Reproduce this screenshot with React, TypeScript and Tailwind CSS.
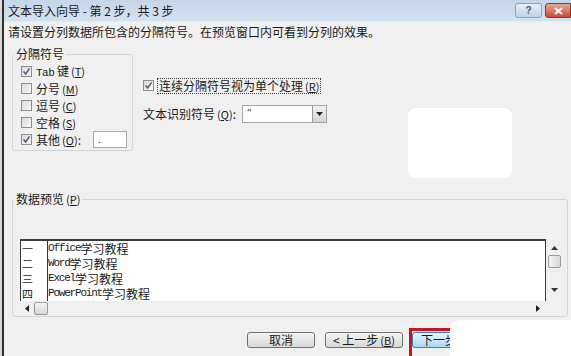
import React from "react";

function Box({ checked }: { checked?: boolean }) {
  return (
    <span className="w-[11px] h-[11px] border border-[#8f8f8f] bg-linear-to-br from-[#d9d9d9] to-[#f8f8f8] flex items-center justify-center shrink-0">
      {checked && (
        <svg width="9" height="9" viewBox="0 0 9 9">
          <path d="M1.6 4.4 L3.6 7 L7.6 1.4" stroke="#4a5c82" strokeWidth="1.5" fill="none" />
        </svg>
      )}
    </span>
  );
}

function M({ k }: { k: string }) {
  return (
    <span className="text-[11px] ml-[2px]">
      (<span className="underline">{k}</span>)
    </span>
  );
}

const rows: [string, string][] = [
  ["一", "Office"],
  ["二", "Word"],
  ["三", "Excel"],
  ["四", "PowerPoint"],
];

function Btn({ children, blue, wide }: { children: React.ReactNode; blue?: boolean; wide?: boolean }) {
  return (
    <div
      className={
        "h-[16px] rounded-[3px] border flex items-center justify-center text-[12px] leading-none whitespace-nowrap " +
        (wide ? "w-[78px] " : "w-[68px] ") +
        (blue
          ? "border-[#3c7fb1] bg-linear-to-b from-[#eaf6fd] to-[#a7d9f5]"
          : "border-[#707070] bg-linear-to-b from-[#f4f4f4] to-[#d8d8d8]")
      }
    >
      {children}
    </div>
  );
}

export default function App() {
  return (
    <div className="w-[571px] h-[356px] overflow-hidden relative bg-[#f0f0f0] flex text-[#1a1a1a] font-['Noto_Sans_CJK_SC','Noto_Sans',sans-serif]">
      <div className="w-[2px] bg-[#d8d8d8] shrink-0" />
      <div className="flex-1 border-l-2 border-[#2f2f2f] flex flex-col min-w-0">
        {/* Title bar */}
        <div className="h-[22px] flex items-center bg-linear-to-b from-[#c6d6e9] to-[#d4e1ef] border-b border-[#e4ebf3] pl-[4px] shrink-0">
          <span className="text-[12px] leading-none whitespace-pre">文本导入向导 - 第 2 步，共 3 步</span>
          <div className="ml-auto flex items-center gap-[3px]">
            <div className="w-[27px] h-[15px] rounded-[3px] border border-[#8ea3bf] bg-linear-to-b from-[#e6eef7] to-[#c3d3e6] flex items-center justify-center text-[10px] leading-none text-[#4a5a78] font-['Liberation_Sans',sans-serif] font-bold">
              ?
            </div>
            <div className="w-[26px] h-[15px] rounded-l-[3px] border border-[#8b3a30] bg-linear-to-b from-[#e9a497] to-[#c44a3c] flex items-center justify-center">
              <svg width="9" height="8" viewBox="0 0 9 8">
                <path d="M1 1 L8 7 M8 1 L1 7" stroke="#fff" strokeWidth="2" />
              </svg>
            </div>
          </div>
        </div>

        {/* Body */}
        <div className="pl-[4px] flex flex-col">
          <div className="text-[12px] leading-[16px] mt-[2px]">
            请设置分列数据所包含的分隔符号。在预览窗口内可看到分列的效果。
          </div>

          <div className="flex mt-[7px]">
            <fieldset className="ml-[4px] w-[121px] border border-[#d0d8de] rounded-[3px] p-0">
              <legend className="ml-[1px] px-[2px] text-[12px] leading-[14px]">分隔符号</legend>
              <div className="pl-[8px] pt-[2px] pb-[2px] flex flex-col text-[12px]">
                <div className="h-[17px] flex items-center gap-[4px]">
                  <Box checked />
                  <span>
                    <span className="font-['Liberation_Mono',monospace] text-[11px] tracking-[-0.5px]">Tab</span> 键<M k="T" />
                  </span>
                </div>
                <div className="h-[17px] flex items-center gap-[4px]">
                  <Box />
                  <span>
                    分号<M k="M" />
                  </span>
                </div>
                <div className="h-[17px] flex items-center gap-[4px]">
                  <Box />
                  <span>
                    逗号<M k="C" />
                  </span>
                </div>
                <div className="h-[17px] flex items-center gap-[4px]">
                  <Box />
                  <span>
                    空格<M k="S" />
                  </span>
                </div>
                <div className="h-[17px] flex items-center gap-[4px]">
                  <Box checked />
                  <span className="w-[53px]">
                    其他<M k="O" />:
                  </span>
                  <div className="w-[34px] h-[17px] border border-[#a8a8a8] bg-white text-[10px] leading-none flex items-end pl-[4px] pb-[3px]">
                    .
                  </div>
                </div>
              </div>
            </fieldset>

            <div className="ml-[10px] flex flex-col text-[12px]">
              <div className="mt-[31px] h-[15px] flex items-center gap-[3px]">
                <Box checked />
                <span className="border border-dotted border-[#444] px-[1px] leading-[13px]">
                  连续分隔符号视为单个处理<M k="R" />
                </span>
              </div>
              <div className="mt-[12px] h-[18px] flex items-center">
                <span className="w-[99px]">
                  文本识别符号<M k="Q" />:
                </span>
                <div className="w-[85px] h-[18px] border border-[#a5a5a5] bg-white flex">
                  <span className="flex-1 pl-[4px] text-[11px] leading-[12px] font-['Liberation_Serif',serif]">"</span>
                  <div className="w-[14px] border-l border-[#9a9a9a] bg-linear-to-b from-[#f2f2f2] to-[#d4d4d4] flex items-center justify-center">
                    <svg width="7" height="4" viewBox="0 0 7 4">
                      <path d="M0 0 L7 0 L3.5 4 Z" fill="#222" />
                    </svg>
                  </div>
                </div>
              </div>
            </div>
          </div>

          {/* Data preview */}
          <fieldset className="mt-[41px] ml-[4px] w-[556px] border border-[#d0d8de] rounded-[3px] p-0">
            <legend className="ml-[1px] px-[2px] text-[12px] leading-[14px]">
              数据预览<M k="P" />
            </legend>
            <div className="pl-[7px] pr-[5px] pt-[33px] flex flex-col">
              <div className="flex">
                <div className="flex-1 h-[62px] border-t-2 border-l-[1.5px] border-r border-[#3a3a3a] bg-white flex">
                  <div className="w-[27px] border-r border-[#333] flex flex-col">
                    {rows.map((r) => (
                      <div key={r[0]} className="h-[15px] flex items-center text-[10px] leading-none pl-[1px] scale-x-110 origin-left">
                        {r[0]}
                      </div>
                    ))}
                  </div>
                  <div className="flex-1 flex flex-col">
                    {rows.map((r) => (
                      <div key={r[1]} className="h-[15px] flex items-center text-[12px] leading-none">
                        <span className="font-['Liberation_Mono',monospace] text-[11px] tracking-[-1.2px]">{r[1]}</span>
                        <span>学习教程</span>
                      </div>
                    ))}
                  </div>
                </div>
                <div className="w-[16px] h-[62px] flex flex-col items-center">
                  <svg className="mt-[7px]" width="7" height="4" viewBox="0 0 7 4">
                    <path d="M0 4 L7 4 L3.5 0 Z" fill="#333" />
                  </svg>
                  <div className="mt-[5px] w-[13px] h-[13px] rounded-[2px] border border-[#9a9a9a] bg-linear-to-r from-[#f4f4f4] to-[#d9d9d9]" />
                  <svg className="mt-[20px]" width="7" height="4" viewBox="0 0 7 4">
                    <path d="M0 0 L7 0 L3.5 4 Z" fill="#333" />
                  </svg>
                </div>
              </div>
              <div className="h-[15px] w-[526px] flex items-center">
                <svg className="ml-[5px]" width="4" height="7" viewBox="0 0 4 7">
                  <path d="M4 0 L4 7 L0 3.5 Z" fill="#222" />
                </svg>
                <div className="ml-[5px] w-[14px] h-[13px] rounded-[2px] border border-[#9a9a9a] bg-linear-to-b from-[#f4f4f4] to-[#d9d9d9]" />
                <svg className="ml-auto mr-[6px]" width="4" height="7" viewBox="0 0 4 7">
                  <path d="M0 0 L0 7 L4 3.5 Z" fill="#222" />
                </svg>
              </div>
            </div>
          </fieldset>

          {/* Buttons */}
          <div className="mt-[15px] flex pl-[239px]">
            <Btn>取消</Btn>
            <div className="ml-[10px]">
              <Btn wide>
                &lt; 上一步<M k="B" />
              </Btn>
            </div>
            <div className="relative ml-[9px]">
              <Btn blue wide>
                下一步<M k="N" /> &gt;
              </Btn>
              <div className="absolute -left-[3px] -top-[4px] w-[60px] h-[40px] border-[3px] border-[#c8141e]" />
            </div>
            <div className="ml-[9px]">
              <Btn>
                完成<M k="F" />
              </Btn>
            </div>
          </div>
        </div>
      </div>

      {/* White erased areas */}
      <div className="absolute left-[408px] top-[108px] w-[104px] h-[70px] bg-white rounded-[8px]" />
      <div className="absolute left-[450px] top-[320px] w-[121px] h-[36px] bg-white rounded-tl-[10px]" />
    </div>
  );
}
